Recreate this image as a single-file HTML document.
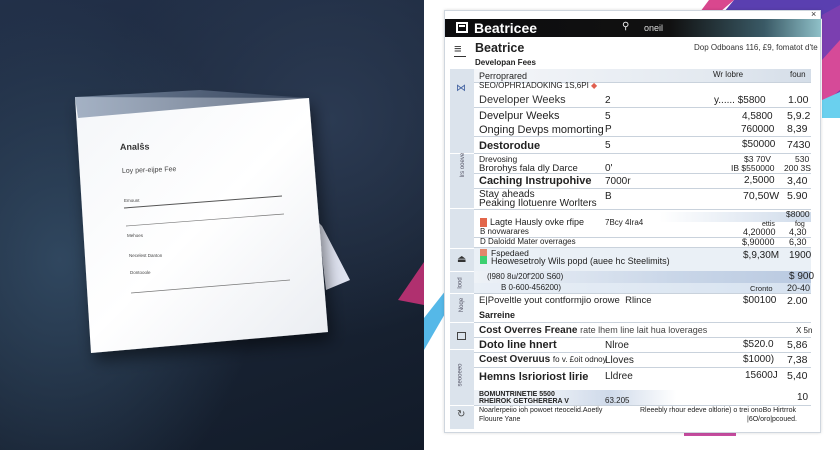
<!DOCTYPE html>
<html><head><meta charset="utf-8"><style>
*{margin:0;padding:0;box-sizing:border-box}
body{width:840px;height:450px;overflow:hidden;position:relative;font-family:"Liberation Sans",sans-serif;background:#fff}
.t{position:absolute;white-space:nowrap;color:#222;font-size:10px;line-height:1}
.b{font-weight:bold}
.hl{position:absolute;left:474px;width:337px;height:1px;background:#c9d2dc}
.sd{position:absolute;left:450px;width:24px;height:1px;background:#fff}
</style></head><body>
<div style="position:absolute;left:0;top:0;width:424px;height:450px;background:radial-gradient(ellipse 200px 260px at 60px 260px,#30475f 0%,rgba(40,60,85,0) 100%),radial-gradient(ellipse 220px 220px at 330px 120px,#2b3a52 0%,rgba(30,42,60,0) 100%),linear-gradient(160deg,#223049 0%,#1a2536 55%,#121b29 100%)"></div>
<svg style="position:absolute;left:0;top:0" width="424" height="450">
<defs><linearGradient id="pg" x1="0" y1="0" x2="1" y2="1"><stop offset="0" stop-color="#f4f6f9"/><stop offset=".5" stop-color="#ffffff"/><stop offset="1" stop-color="#e9ecf1"/></linearGradient>
<linearGradient id="tp" x1="0" x2="1"><stop offset="0" stop-color="#8a9bb3"/><stop offset="1" stop-color="#3d4b63"/></linearGradient>
<filter id="sh"><feDropShadow dx="4" dy="8" stdDeviation="8" flood-color="#000" flood-opacity=".5"/></filter></defs>
<polygon points="318,222 322,226 350,280 326,290" fill="#dfe3f0"/>
<polygon points="75,97 309,98 328,332 91,353" fill="url(#pg)" filter="url(#sh)"/>
<polygon points="75,97 200,90 309,98 78,118" fill="url(#tp)" opacity=".75"/>
<polygon points="424,262 398,300 424,305" fill="#b0306f"/>
<text x="120" y="150" font-size="9" font-weight="bold" fill="#333" font-family="Liberation Sans" transform="rotate(-1 120 150)">Analŝs</text>
<text x="122" y="173" font-size="7" fill="#444" font-family="Liberation Sans" transform="rotate(-2 122 173)">Loy per-eijpe Fee</text>
<text x="124" y="202" font-size="4.5" fill="#444" font-family="Liberation Sans">Emount</text>
<line x1="124" y1="208" x2="282" y2="196" stroke="#555" stroke-width="1"/>
<line x1="126" y1="226" x2="284" y2="214" stroke="#777" stroke-width=".7"/>
<text x="127" y="237" font-size="4.5" fill="#444" font-family="Liberation Sans">Mehoes</text>
<text x="129" y="257" font-size="4.5" fill="#444" font-family="Liberation Sans">Necelest Danton</text>
<text x="130" y="274" font-size="4.5" fill="#444" font-family="Liberation Sans">Dontooole</text>
<line x1="131" y1="293" x2="290" y2="280" stroke="#777" stroke-width=".7"/>
</svg>
<svg style="position:absolute;left:424px;top:0" width="416" height="450">
<polygon points="285,0 310,0 296,12 276,12" fill="#d9478e"/>
<polygon points="310,0 416,0 416,20 300,12" fill="#5a3fb0"/>
<polygon points="398,15 416,5 416,110 398,105" fill="#7b3fb0"/>
<polygon points="398,60 416,40 416,90 398,105" fill="#d64a98"/>
<polygon points="398,100 416,92 416,118 398,118" fill="#6ad0ee"/>
<polygon points="0,318 22,290 22,312 0,350" fill="#55b8e8"/>
<rect x="260" y="432" width="52" height="4" fill="#c84da0"/>
</svg>
<div style="position:absolute;left:444px;top:10px;width:377px;height:423px;background:#fff;border:1px solid #cfd6de;box-shadow:0 0 3px rgba(0,0,0,.15)"></div>
<div class="t" style="left:811px;top:10px;font-size:9px;color:#333">×</div>
<div style="position:absolute;left:445px;top:19px;width:376px;height:18px;background:linear-gradient(90deg,#0c0c0e 0%,#111 60%,#3a5a66 85%,#8fc0c8 100%)"></div>
<div style="position:absolute;left:456px;top:22px;width:12px;height:11px;border:2px solid #fff"></div>
<div style="position:absolute;left:459px;top:25px;width:6px;height:2px;background:#fff"></div>
<div class="t b" style="left:474px;top:21px;font-size:14px;color:#fff">Beatricee</div>
<div class="t" style="left:622px;top:22px;font-size:10px;color:#eee">⚲</div>
<div class="t" style="left:644px;top:24px;font-size:9px;color:#ddd">oneil</div>
<div class="t" style="left:454px;top:42px;font-size:13px;color:#333">≡</div>
<div style="position:absolute;left:454px;top:56px;width:12px;height:1px;background:#333"></div>
<div class="t b" style="left:475px;top:42px;font-size:12.5px">Beatrice</div>
<div class="t" style="left:694px;top:44px;font-size:8px;color:#333">Dop Odboans 116, £9, fomatot d'te</div>
<div class="t b" style="left:475px;top:59px;font-size:8px">Developan Fees</div>
<div style="position:absolute;left:450px;top:69px;width:24px;height:360px;background:#dbe3ec"></div>
<div class="sd" style="top:153px"></div><div class="sd" style="top:208px"></div><div class="sd" style="top:248px"></div><div class="sd" style="top:271px"></div><div class="sd" style="top:293px"></div><div class="sd" style="top:322px"></div><div class="sd" style="top:349px"></div><div class="sd" style="top:405px"></div>
<div class="t" style="left:456px;top:84px;font-size:10px;color:#4060a0">⋈</div>
<div class="t" style="left:451px;top:162px;font-size:6px;color:#556;transform:rotate(-90deg)">lrs ooeve</div>
<div class="t" style="left:457px;top:255px;font-size:10px;color:#333">⏏</div>
<div class="t" style="left:455px;top:280px;font-size:6px;color:#556;transform:rotate(-90deg)">lood</div>
<div class="t" style="left:455px;top:302px;font-size:6px;color:#556;transform:rotate(-90deg)">Noqe</div>
<div style="position:absolute;left:457px;top:332px;width:9px;height:8px;border:1px solid #444"></div>
<div class="t" style="left:449px;top:372px;font-size:6px;color:#556;transform:rotate(-90deg)">seooeeo</div>
<div class="t" style="left:457px;top:410px;font-size:10px;color:#444">↻</div>
<div style="position:absolute;left:474px;top:69px;width:337px;height:13px;background:linear-gradient(90deg,#f4f6f9,#e3e9f0 70%,#d4dde8)"></div>
<div style="position:absolute;left:474px;top:212px;width:337px;height:10px;background:linear-gradient(90deg,#fff 55%,#cfdbea)"></div>
<div style="position:absolute;left:474px;top:248px;width:337px;height:23px;background:#eaf0f6"></div>
<div style="position:absolute;left:474px;top:271px;width:337px;height:12px;background:linear-gradient(90deg,#eef2f7,#c9d6e8 60%,#b9c9e0)"></div>
<div style="position:absolute;left:474px;top:283px;width:337px;height:10px;background:linear-gradient(90deg,#e9eff6,#d6e2f0)"></div>
<div style="position:absolute;left:474px;top:390px;width:337px;height:15px;background:linear-gradient(90deg,#eef2f7 20%,#cfdaea 40%,#fff 60%)"></div>
<div class="hl" style="top:82px"></div><div class="hl" style="top:107px"></div><div class="hl" style="top:136px"></div><div class="hl" style="top:153px"></div><div class="hl" style="top:173px"></div><div class="hl" style="top:188px"></div><div class="hl" style="top:209px"></div><div class="hl" style="top:237px"></div><div class="hl" style="top:247px"></div><div class="hl" style="top:293px"></div><div class="hl" style="top:322px"></div><div class="hl" style="top:337px"></div><div class="hl" style="top:352px"></div><div class="hl" style="top:367px"></div><div class="hl" style="top:405px"></div>
<div class="t" style="left:479px;top:72px;font-size:9px">Perroprared</div>
<div class="t" style="left:713px;top:71px;font-size:8px">Wr lobre</div>
<div class="t" style="left:790px;top:71px;font-size:8px">foun</div>
<div class="t" style="left:479px;top:82px;font-size:8px">SEO/OPHR1ADOKING 1S,6PI <span style="color:#e06050">◆</span></div>
<div class="t" style="left:479px;top:95px;font-size:11px;color:#333">Developer Weeks</div><div class="t" style="left:605px;top:96px">2</div><div class="t" style="left:714px;top:96px">y......  $5800</div><div class="t" style="left:788px;top:95px;font-size:10.5px">1.00</div>
<div class="t" style="left:479px;top:111px;font-size:11px">Develpur Weeks</div><div class="t" style="left:605px;top:112px">5</div><div class="t" style="left:742px;top:112px">4,5800</div><div class="t" style="left:787px;top:111px;font-size:10.5px">5,9.2</div>
<div class="t" style="left:479px;top:125px;font-size:11px">Onging Devps momorting</div><div class="t" style="left:605px;top:125px">P</div><div class="t" style="left:741px;top:125px">760000</div><div class="t" style="left:787px;top:124px;font-size:10.5px">8,39</div>
<div class="t b" style="left:479px;top:141px;font-size:11px">Destorodue</div><div class="t" style="left:605px;top:141px">5</div><div class="t" style="left:742px;top:140px">$50000</div><div class="t" style="left:787px;top:140px;font-size:10.5px">7430</div>
<div class="t" style="left:479px;top:155px;font-size:8.5px">Drevosing</div><div class="t" style="left:744px;top:155px;font-size:8.5px">$3 70V</div><div class="t" style="left:795px;top:155px;font-size:8.5px">530</div>
<div class="t" style="left:479px;top:164px;font-size:9.5px">Brorohys fala dly Darce</div><div class="t" style="left:605px;top:164px">0'</div><div class="t" style="left:731px;top:164px;font-size:8.5px">IB $550000</div><div class="t" style="left:784px;top:164px;font-size:8.5px">200 3S</div>
<div class="t b" style="left:479px;top:176px;font-size:11px">Caching Instrupohive</div><div class="t" style="left:605px;top:177px">7000r</div><div class="t" style="left:744px;top:176px">2,5000</div><div class="t" style="left:787px;top:176px;font-size:10.5px">3,40</div>
<div class="t" style="left:479px;top:190px;font-size:10px">Stay aheads</div><div class="t" style="left:479px;top:199px;font-size:10px">Peaking Ilotuenre Worlters</div><div class="t" style="left:605px;top:192px">B</div><div class="t" style="left:743px;top:191px;font-size:10.5px">70,50W</div><div class="t" style="left:787px;top:191px;font-size:10.5px">5.90</div>
<div class="t" style="left:786px;top:210px;font-size:8.5px">$8000</div>
<div style="position:absolute;left:480px;top:218px;width:7px;height:9px;background:#e2664a"></div>
<div class="t" style="left:490px;top:218px;font-size:9px">Lagte Hausly ovke rfipe</div><div class="t" style="left:605px;top:219px;font-size:8px">7Bcy 4Ira4</div><div class="t" style="left:762px;top:221px;font-size:7px">ettis</div><div class="t" style="left:795px;top:221px;font-size:7px">fog</div>
<div class="t" style="left:480px;top:228px;font-size:8px">B novwarares</div><div class="t" style="left:743px;top:228px;font-size:9px">4,20000</div><div class="t" style="left:789px;top:228px;font-size:9px">4,30</div>
<div class="t" style="left:480px;top:238px;font-size:8px">D Daloidd Mater overrages</div><div class="t" style="left:742px;top:238px;font-size:9px">$,90000</div><div class="t" style="left:789px;top:238px;font-size:9px">6,30</div>
<div style="position:absolute;left:480px;top:249px;width:7px;height:7px;background:#e2866a"></div>
<div style="position:absolute;left:480px;top:256px;width:7px;height:8px;background:#3cd070"></div>
<div class="t" style="left:491px;top:249px;font-size:8.5px">Fspedaed</div><div class="t" style="left:491px;top:257px;font-size:9px">Heowesetroly Wils popd (auee hc Steelimits)</div><div class="t" style="left:743px;top:251px;font-size:10px">$,9,30M</div><div class="t" style="left:789px;top:251px;font-size:10px">1900</div>
<div class="t" style="left:487px;top:273px;font-size:8px">(l980 8u/20f'200 S60)</div><div class="t" style="left:789px;top:272px;font-size:10px">$ 900</div>
<div class="t" style="left:501px;top:284px;font-size:8px">B 0-600-456200)</div><div class="t" style="left:750px;top:285px;font-size:7.5px">Cronto</div><div class="t" style="left:787px;top:284px;font-size:9px">20-40</div>
<div class="t" style="left:479px;top:296px;font-size:9.5px">E|Poveltle yout contformjio orowe&nbsp; Rlince</div><div class="t" style="left:743px;top:296px">$00100</div><div class="t" style="left:787px;top:296px;font-size:10.5px">2.00</div>
<div class="t b" style="left:479px;top:311px;font-size:9px">Sarreine</div>
<div class="t" style="left:479px;top:326px;font-size:10px"><b>Cost Overres Freane</b> <span style="font-size:9px;color:#444">rate lhem line lait hua loverages</span></div><div class="t" style="left:796px;top:327px;font-size:8px">X 5n</div>
<div class="t b" style="left:479px;top:340px;font-size:11px">Doto line hnert</div><div class="t" style="left:605px;top:341px">Nlroe</div><div class="t" style="left:743px;top:340px">$520.0</div><div class="t" style="left:787px;top:340px;font-size:10.5px">5,86</div>
<div class="t" style="left:479px;top:355px;font-size:10px"><b>Coest Overuus</b> <span style="font-size:8px">fo v. £oit odnoy</span></div><div class="t" style="left:605px;top:356px">Lloves</div><div class="t" style="left:743px;top:355px">$1000)</div><div class="t" style="left:787px;top:355px;font-size:10.5px">7,38</div>
<div class="t b" style="left:479px;top:372px;font-size:11px">Hemns lsrioriost lirie</div><div class="t" style="left:605px;top:372px">Lldree</div><div class="t" style="left:745px;top:371px">15600J</div><div class="t" style="left:787px;top:371px;font-size:10.5px">5,40</div>
<div class="t b" style="left:479px;top:391px;font-size:7px">BOMUNTRINETIE 5500</div><div class="t b" style="left:479px;top:398px;font-size:7px">RHEIROK GETGHERERA V</div><div class="t" style="left:605px;top:397px;font-size:8px">63.205</div><div class="t" style="left:797px;top:393px">10</div>
<div class="t" style="left:479px;top:407px;font-size:7px">Noarlerpeiio ioh powoet rteocelid.Aoetly</div><div class="t" style="left:479px;top:416px;font-size:7px">Flouure Yane</div>
<div class="t" style="left:640px;top:407px;font-size:7px">Rleeebly rhour edeve oltlorie) o trei onoBo Hirtrrok</div><div class="t" style="left:747px;top:416px;font-size:7px">|6O/oro|pcoued.</div>
</body></html>
